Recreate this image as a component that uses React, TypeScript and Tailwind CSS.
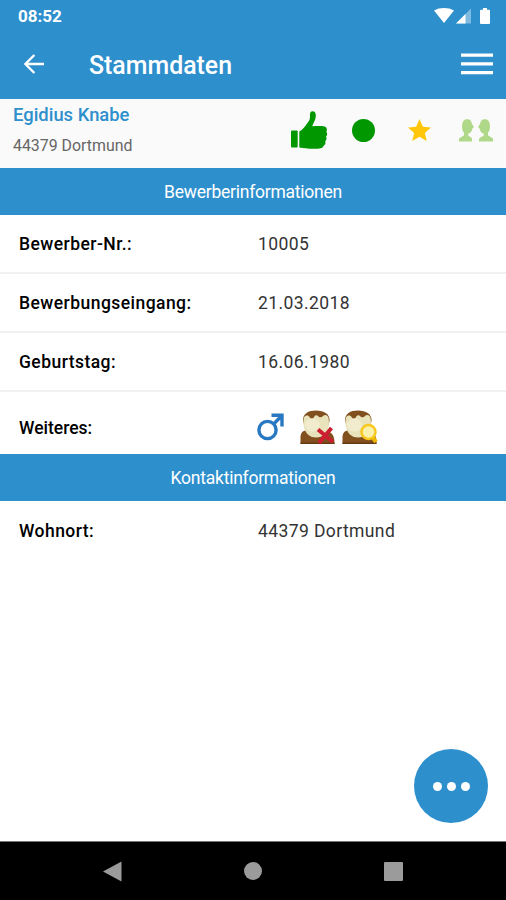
import React from "react";

function StatusBar() {
  return (
    <div className="flex h-8 items-center justify-between pl-[18px] pr-4">
      <span className="pt-px text-[17px] font-bold">08:52</span>
      <div className="flex h-4 items-center">
        <svg width="20" height="16" viewBox="0 0 20 16" fill="#fff">
          <path d="M0 2.500C5.500-.8 14.500-.8 20 2.500L10 15Z" />
        </svg>
        <svg className="ml-[2px]" width="15" height="16" viewBox="0 0 15 16">
          <path d="M15 .5V15.500H0Z" fill="#7fbae1" />
          <path d="M9.500 6V15.500H0Z" fill="#fff" />
        </svg>
        <svg className="ml-[9px]" width="10" height="17" viewBox="0 0 10 17" fill="#fff">
          <path d="M3 0H7V1.700H9Q10 1.700 10 2.700V15Q10 16 9 16H1Q0 16 0 15V2.700Q0 1.700 1 1.700H3Z" />
        </svg>
      </div>
    </div>
  );
}

function TitleBar() {
  return (
    <div className="flex h-[67px] items-center pl-6 pr-[13px]">
      <svg className="-mt-[3px]" width="20" height="20" viewBox="0 0 20 20" fill="none" stroke="#fff" strokeWidth="2.400">
        <path d="M20 10H1.500M10.400 1L1.400 10L10.400 19" />
      </svg>
      <h1 className="ml-[45px] flex-1 text-[24.900px] font-medium leading-8">Stammdaten</h1>
      <svg className="-mt-[3px]" width="32" height="22" viewBox="0 0 32 22" fill="#fff">
        <path d="M0 .5H32V3.800H0ZM0 9.300H32V12.600H0ZM0 18H32V21.300H0Z" />
      </svg>
    </div>
  );
}

function Profile() {
  return (
    <div className="flex h-[69px] bg-[#fafafa] pl-[13px] pr-[13px]">
      <div className="flex-1">
        <h2 className="mt-1 text-[18.400px] font-medium leading-6 text-[#2e8fcd]">Egidius Knabe</h2>
        <p className="mt-[7px] text-[15.900px] leading-6 text-[#666]">44379 Dortmund</p>
      </div>
      <div className="flex h-[62px] items-center">
        <svg width="37" height="38" viewBox="0 0 37 38" fill="#009700">
          <rect x="0" y="19.500" width="6.700" height="17" rx="1" />
          <path d="M8.300 20.500C11 19 13.500 16.500 15.500 13.300C17.500 10.700 18.800 9.500 19 6C18.800 2.500 19 .6 21.200.3C24.500 0 25.500 3.500 24.500 7.200C23.800 10.200 21.700 13 21.300 15.200C25.500 15.200 30 14.800 33.500 15.500C36 16.200 36.600 19 35.300 20.700C36.700 22.100 36.500 24.400 35 25.500C36 27.200 35.600 29.200 34.200 30.200C35 32.300 34.100 34 32.600 34.700C31.500 37.500 29 37.700 23 37.800C17 37.900 13 37 8.300 36.500Z" />
        </svg>
        <span className="ml-6 size-[23px] rounded-full bg-[#009700]" />
        <svg className="ml-[33px]" width="23" height="22" viewBox="0 0 23 22" fill="#ffc60b">
          <path d="M11.500 0L14.900 7.700L23 8.400L16.900 13.900L18.700 22L11.500 17.800L4.300 22L6.100 13.900L0 8.400L8.100 7.700Z" />
        </svg>
        <svg className="ml-7" width="34" height="23" viewBox="0 0 34 23" fill="#afd889">
          <path d="M0 22.500V19.600C1.500 18.300 4 17.500 5 16.300V13.800C3.400 12.100 2.900 9.500 3.100 6.200C3.300 2 5.400.3 8.200.3C11.300.3 12.600 2.200 12.900 4.700L14.900 8L13.300 9.800C12.800 13 11.200 14.600 9.200 14.600V16.600C10.300 17.800 12.800 18.200 13 20V22.500Z" />
          <path d="M34 22.500V19.600C32.500 18.300 30 17.500 29 16.300V13.800C30.600 12.100 31.100 9.500 30.900 6.200C30.700 2 28.600.3 25.800.3C22.700.3 21.400 2.200 21.100 4.700L19.100 8L20.700 9.800C21.200 13 22.800 14.600 24.800 14.600V16.600C23.700 17.800 20.500 18.200 20 20V22.500Z" />
        </svg>
      </div>
    </div>
  );
}

function SectionTitle({ children }: { children: React.ReactNode }) {
  return (
    <h3 className="flex h-[47px] items-center justify-center bg-[#2e8fcd] pt-0.5 text-[17.500px] tracking-[-0.24px] text-white">
      {children}
    </h3>
  );
}

type RowProps = {
  label: string;
  children: React.ReactNode;
  className?: string;
  labelClassName?: string;
};

function Row({ label, children, className = "h-[59px]", labelClassName = "tracking-[0.45px]" }: RowProps) {
  return (
    <div className={`flex items-center pl-[19px] text-[17.500px] ${className}`}>
      <span className={`w-[239px] font-medium text-black ${labelClassName}`}>{label}</span>
      <div className="tracking-[0.4px] text-[#333]">{children}</div>
    </div>
  );
}

function Head() {
  return (
    <>
      <path d="M.5 34V26C1 22.500 3 20.800 5.500 20.500L28 21.500C32 23 34.500 25 34.500 34Z" fill="#81501e" />
      <path d="M.5 34V32.500H34.500V34Z" fill="#673b12" />
      <path d="M3 11C2.500 3.500 8.500.5 16 .5C24 .5 30 4 29.500 11L27 20H6Z" fill="#81501e" />
      <path d="M4 7.500C5.500 5 8 5 9.500 7C11 9 13 9.300 14 7C15 5 17 4.500 18 6C19.500 8 22 7.500 23.500 5.500C25.500 4 28 5.500 28.500 8C29.500 13 29 19 25.500 23.500C22 28 13 29 8.500 25C3.500 20.500 2.500 12.500 4 7.500Z" fill="#e9e3bc" />
      <ellipse cx="12.500" cy="15" rx="7.500" ry="6.500" fill="#f1ecce" />
    </>
  );
}

function Extras() {
  return (
    <div className="flex items-center">
      <svg className="-ml-px" width="27" height="28" viewBox="0 0 27 28" fill="none" stroke="#2878c2" strokeWidth="3.400">
        <circle cx="10.500" cy="17" r="8.600" />
        <path d="M16.600 11L24.500 3M14.500 2.300H25V13.500" />
      </svg>
      <svg className="ml-4" width="35" height="35" viewBox="0 0 35 35">
        <Head />
        <path d="M18 19.500L33 32M31.500 18L19 33" stroke="#cb1f31" strokeWidth="4" />
      </svg>
      <svg className="ml-[7px]" width="37" height="35" viewBox="0 0 37 35">
        <Head />
        <path d="M30.500 27L34 32" stroke="#edb700" strokeWidth="4" />
        <circle cx="26.500" cy="22" r="7" fill="#faf1ad" stroke="#f8c81e" strokeWidth="2.500" />
      </svg>
    </div>
  );
}

function NavBar() {
  return (
    <div className="flex h-[59px] items-center border-t border-[#777] bg-black pl-[103px] text-[#9b9b9b]">
      <svg width="19" height="21" viewBox="0 0 19 21" fill="currentColor">
        <path d="M18.500.5V20.500L0 10.500Z" />
      </svg>
      <span className="ml-[122px] size-[18px] rounded-full bg-current" />
      <span className="ml-[122px] size-[19px] rounded-[1px] bg-current" />
    </div>
  );
}

export default function App() {
  return (
    <div className="flex h-[900px] w-[506px] flex-col overflow-hidden bg-white font-['Roboto',sans-serif]">
      <header className="bg-[#2e8fcd] text-white">
        <StatusBar />
        <TitleBar />
      </header>
      <Profile />
      <SectionTitle>Bewerberinformationen</SectionTitle>
      <Row label="Bewerber-Nr.:" className="h-[59px] border-b-2 border-[#f1f1f1] pt-0.5">10005</Row>
      <Row label="Bewerbungseingang:" className="h-[59px] border-b-2 border-[#f1f1f1] pt-0.5">21.03.2018</Row>
      <Row label="Geburtstag:" className="h-[59px] border-b-2 border-[#f1f1f1] pt-0.5">16.06.1980</Row>
      <Row label="Weiteres:" className="h-[62px] pt-2" labelClassName="pt-0.5">
        <Extras />
      </Row>
      <SectionTitle>Kontaktinformationen</SectionTitle>
      <Row label="Wohnort:" className="h-[59px] pt-0.5">44379 Dortmund</Row>
      <div className="flex flex-1 items-end justify-end pb-[18px] pr-[18px]">
        <button className="flex size-[74px] items-center justify-center gap-[5px] rounded-full bg-[#2e8fcd]">
          <span className="size-[9px] rounded-full bg-white" />
          <span className="size-[9px] rounded-full bg-white" />
          <span className="size-[9px] rounded-full bg-white" />
        </button>
      </div>
      <NavBar />
    </div>
  );
}
